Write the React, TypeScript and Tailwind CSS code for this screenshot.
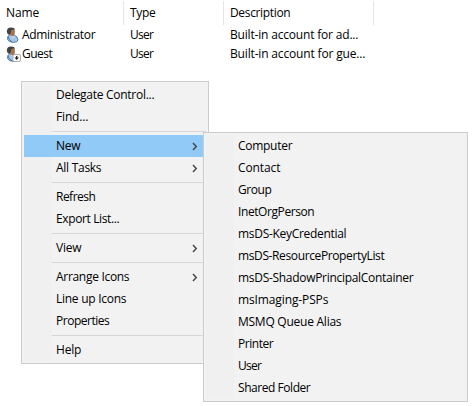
import { useLayoutEffect, useRef } from "react";

// Text run whose tracking is tuned so that it spans the given width.
function Label({ text, width }: { text: string; width: number }) {
  const ref = useRef<HTMLSpanElement>(null);
  useLayoutEffect(() => {
    const el = ref.current;
    if (!el) return;
    el.style.letterSpacing = "0px";
    const natural = el.getBoundingClientRect().width;
    el.style.letterSpacing = `${(width + 0.3 - natural) / text.length}px`;
  }, [text, width]);
  return (
    <span ref={ref} className="inline-block whitespace-pre">
      {text}
    </span>
  );
}

function UserIcon({ disabled = false }: { disabled?: boolean }) {
  return (
    <svg className="h-4 w-4 shrink-0" viewBox="0 0 16 16">
      <path d="M2.6 12.5 Q2.2 8.8 4.4 8.2 L9 8 Q12.6 9 13 12.8 Q12.6 15.3 8.5 15.4 Q3.6 15.2 2.6 12.5Z" fill="#a3c8ea" stroke="#4a7099" strokeWidth="0.9" />
      <path d="M3 9.5 Q3.4 12.8 7 15" stroke="#4a7099" strokeWidth="1" fill="none" />
      <path d="M5.8 8.6 L8 11 L9.8 8.4Z" fill="#e4eff9" />
      <path d="M4.6 2 L9.2 1.4 Q10.2 3.5 9.8 6.5 Q9.2 9.4 7.6 9.4 Q5.4 8.4 4.6 6Z" fill="#a27450" />
      <path d="M1.8 4.6 Q1.8 0.5 6 0.4 Q9.6 0.4 9.9 2.6 Q7.2 2 6.2 3.4 L5.4 7.6 Q3.6 8.2 2.6 7Z" fill="#454342" />
      {disabled && (
        <>
          <rect x="7.9" y="8.4" width="7.6" height="7.1" rx="1.6" fill="#fafafa" stroke="#9a9a9a" strokeWidth="0.8" />
          <path d="M11 10h1.4v1.4h1.5L11.7 14 9.5 11.4H11z" fill="#252525" />
        </>
      )}
    </svg>
  );
}

function Cell({ text, width, className }: { text: string; width: number; className: string }) {
  return (
    <div className={`flex shrink-0 items-center ${className}`}>
      <Label text={text} width={width} />
    </div>
  );
}

type Entry = { text: string; width: number; arrow?: boolean; active?: boolean } | null;

const mainItems: Entry[] = [
  { text: "Delegate Control...", width: 98 },
  { text: "Find...", width: 32 },
  null,
  { text: "New", width: 24, arrow: true, active: true },
  { text: "All Tasks", width: 45, arrow: true },
  null,
  { text: "Refresh", width: 39 },
  { text: "Export List...", width: 63 },
  null,
  { text: "View", width: 25, arrow: true },
  null,
  { text: "Arrange Icons", width: 73, arrow: true },
  { text: "Line up Icons", width: 70 },
  { text: "Properties", width: 53 },
  null,
  { text: "Help", width: 25 },
];

const newItems: Entry[] = [
  { text: "Computer", width: 54 },
  { text: "Contact", width: 42 },
  { text: "Group", width: 33 },
  { text: "InetOrgPerson", width: 76 },
  { text: "msDS-KeyCredential", width: 108 },
  { text: "msDS-ResourcePropertyList", width: 146 },
  { text: "msDS-ShadowPrincipalContainer", width: 175 },
  { text: "msImaging-PSPs", width: 90 },
  { text: "MSMQ Queue Alias", width: 103 },
  { text: "Printer", width: 35 },
  { text: "User", width: 23 },
  { text: "Shared Folder", width: 72 },
];

function Menu({ items, className }: { items: Entry[]; className: string }) {
  return (
    <div className={`absolute border border-[#cccccc] bg-[#f2f2f2] p-0.5 ${className}`}>
      {items.map((item, i) =>
        item ? (
          <div key={i} className={`flex h-[22px] items-center ${item.active ? "bg-[#91c9f7]" : ""}`}>
            <div className={`h-full w-7 shrink-0 ${item.active ? "" : "bg-[#f0f0f0]"}`} />
            <div className="flex-1 pl-1">
              <Label text={item.text} width={item.width} />
            </div>
            {item.arrow && (
              <svg className="mr-2 h-[9px] w-[6px]" viewBox="0 0 6 9">
                <path d="M1 1 L4.3 4.5 L1 8" fill="none" stroke="#444444" strokeWidth="1.4" />
              </svg>
            )}
          </div>
        ) : (
          <div key={i} className="flex h-[7px]">
            <div className="w-7 shrink-0 bg-[#f0f0f0]" />
            <div className="mt-[3px] h-px flex-1 bg-[#d7d7d7]" />
          </div>
        ),
      )}
    </div>
  );
}

export default function App() {
  return (
    <div className="relative h-[406px] w-[475px] overflow-hidden bg-white font-['Open_Sans','Noto_Sans',sans-serif] text-[12px] leading-4 text-black">
      <div className="flex h-[25px] pt-px">
        <Cell text="Name" width={33} className="w-[124px] border-r border-[#e5e5e5] pl-1.5" />
        <Cell text="Type" width={25} className="w-[100px] border-r border-[#e5e5e5] pl-1.5" />
        <Cell text="Description" width={60} className="w-[150px] border-r border-[#e5e5e5] pl-1.5" />
      </div>
      <div className="flex h-[19px]">
        <div className="flex w-[124px] items-center pl-[5px]">
          <UserIcon />
          <Cell text="Administrator" width={73} className="pl-px" />
        </div>
        <Cell text="User" width={23} className="w-[100px] pl-1.5" />
        <Cell text="Built-in account for ad..." width={128} className="pl-1.5" />
      </div>
      <div className="flex h-[19px]">
        <div className="flex w-[124px] items-center pl-[5px]">
          <UserIcon disabled />
          <Cell text="Guest" width={30} className="pl-px" />
        </div>
        <Cell text="User" width={23} className="w-[100px] pl-1.5" />
        <Cell text="Built-in account for gue..." width={135} className="pl-1.5" />
      </div>
      <Menu items={mainItems} className="left-[21px] top-[81px] w-[188px]" />
      <Menu items={newItems} className="left-[203px] top-[132px] w-[265px]" />
    </div>
  );
}
